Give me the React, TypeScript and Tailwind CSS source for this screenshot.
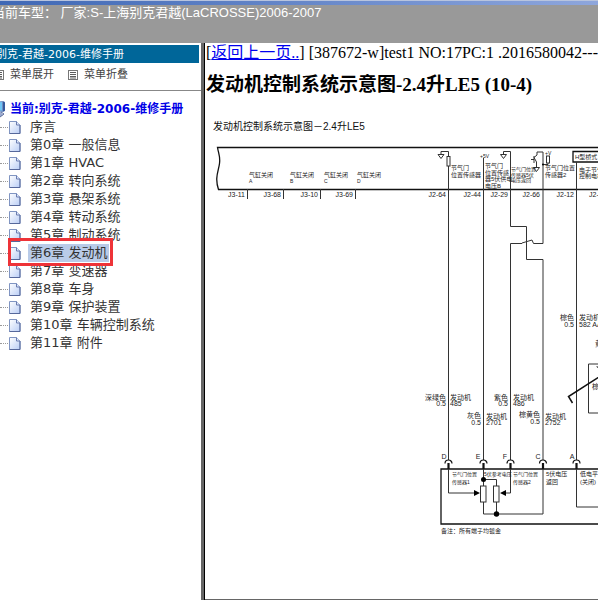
import React from 'react';

const chapters = [
  '序言',
  '第0章 一般信息',
  '第1章 HVAC',
  '第2章 转向系统',
  '第3章 悬架系统',
  '第4章 转动系统',
  '第5章 制动系统',
  '第6章 发动机',
  '第7章 变速器',
  '第8章 车身',
  '第9章 保护装置',
  '第10章 车辆控制系统',
  '第11章 附件',
];

const ACTIVE = 7;

// [x, baseline, size, text, anchor]
type Label = [number, number, number, string, ('end' | 'middle')?];

const labels: Label[] = [
  [249, 177, 6, '气缸关闭'], [249, 183, 5, 'A'],
  [290, 177, 6, '气缸关闭'], [290, 183, 5, 'B'],
  [324, 177, 6, '气缸关闭'], [324, 183, 5, 'C'],
  [357, 177, 6, '气缸关闭'], [357, 183, 5, 'D'],
  [245, 197, 7, 'J3-11', 'end'],
  [281, 197, 7, 'J3-68', 'end'],
  [318, 197, 7, 'J3-10', 'end'],
  [353, 197, 7, 'J3-69', 'end'],
  [446, 197, 7, 'J2-64', 'end'],
  [481, 197, 7, 'J2-44', 'end'],
  [508, 197, 7, 'J2-29', 'end'],
  [540, 197, 7, 'J2-66', 'end'],
  [574, 197, 7, 'J2-12', 'end'],
  [589, 197, 7, 'J2-'],
  [451, 170, 6, '节气门'], [451, 177, 6, '位置传感器'],
  [480, 158, 5, '+5V'],
  [485, 168, 6, '节气门'], [485, 175, 6, '位置传感'],
  [485, 181, 6, '器5伏供电'], [485, 188, 6, '电压B'],
  [511, 171, 5, '节气门位置'], [511, 177, 5, '传感器5伏'], [511, 182, 5, '电压返回'],
  [545, 155, 5, '+V'],
  [545, 170, 6, '节气门位置'], [545, 177, 6, '传感器2'],
  [575, 159, 6, 'H型桥式'],
  [579, 172, 6, '电子节气'], [579, 178, 6, '控制电机'],
  [574, 320, 7, '棕色', 'end'], [574, 327, 7, '0.5', 'end'],
  [579, 320, 7, '发动机'], [579, 327, 7, '582 AA'],
  [595, 346, 7, '黄色'], [592, 389, 7, '棕色'],
  [446, 400, 7, '深绿色', 'end'], [446, 406, 7, '0.5', 'end'],
  [450, 400, 7, '发动机'], [450, 406, 7, '485'],
  [481, 418, 7, '灰色', 'end'], [481, 425, 7, '0.5', 'end'],
  [486, 419, 7, '发动机'], [486, 425, 7, '2701'],
  [508, 400, 7, '紫色', 'end'], [508, 406, 7, '0.5', 'end'],
  [513, 400, 7, '发动机'], [513, 406, 7, '486'],
  [540, 417, 7, '棕黄色', 'end'], [540, 424, 7, '0.5', 'end'],
  [545, 419, 7, '发动机'], [545, 425, 7, '2752'],
  [444, 459, 7, 'D', 'middle'], [478, 459, 7, 'E', 'middle'],
  [505, 459, 7, 'F', 'middle'], [538, 459, 7, 'C', 'middle'],
  [572, 459, 7, 'A', 'middle'],
  [452, 476, 5, '节气门位置'], [452, 484, 5, '传感器1'],
  [484, 476, 5, '5伏参考电压'],
  [513, 476, 5, '节气门位置'], [513, 484, 5, '传感器2'],
  [546, 476, 6, '5伏电压'], [546, 484, 6, '返回'],
  [580, 476, 6, '低电平'], [580, 484, 6, '(关闭)'],
  [441, 533, 6, '备注：所有端子均镀金'],
];

const pins = [448.5, 483.5, 510.5, 543, 576.5];

function PageIcon() {
  return (
    <svg width="14" height="16" viewBox="0 0 14 16" className="shrink-0" aria-hidden="true">
      <defs>
        <linearGradient id="sheet" x1="0" y1="0" x2="1" y2="1">
          <stop offset="0" stopColor="#ffffff" />
          <stop offset="1" stopColor="#b9cdf5" />
        </linearGradient>
      </defs>
      <path d="M1.5 2.5h7l3.500 3.500v8.500h-10.500z" fill="url(#sheet)" stroke="#8095c2" />
      <path d="M12 6v8.500h-10.500" fill="none" stroke="#56689b" />
      <path d="M8.500 2.500v3.500h3.500" fill="#dfe8fb" stroke="#6a7db0" />
    </svg>
  );
}

function ListIcon() {
  return (
    <svg width="10" height="10" viewBox="0 0 10 10" className="shrink-0" aria-hidden="true">
      <rect x="0.5" y="0.5" width="9" height="9" fill="#fff" stroke="#777" />
      <path d="M2 2.5h6M2 4.500h6M2 6.500h6M2 8h6" stroke="#333" strokeWidth="0.8" />
    </svg>
  );
}

function ComputerIcon() {
  return (
    <svg width="16" height="18" viewBox="0 0 16 18" className="shrink-0" aria-hidden="true">
      <path d="M2 2l11-1 2 1v9l-2 1-11-1z" fill="#6f8fc4" />
      <path d="M3 3l9-1v8.500l-9-.5z" fill="#6fc6f5" />
      <path d="M13 1.500l2 1v8l-2 1z" fill="#35589c" />
      <path d="M6 12h5l2 3-3 2H5l-2-2z" fill="#9aa9cf" />
      <path d="M11 12l3 2-4 3" fill="none" stroke="#5c6d9b" />
    </svg>
  );
}

function WiringDiagram() {
  return (
    <svg
      width="460"
      height="440"
      viewBox="205 111 460 440"
      className="block max-w-none font-['Liberation_Sans','Noto_Sans_CJK_SC',sans-serif]"
      role="img"
      aria-label="发动机控制系统示意图"
    >
      <text x="213" y="130" fontSize="10" fill="#111">发动机控制系统示意图－2.4升LE5</text>

      <g fill="none" stroke="#111" strokeWidth="1.3">
        <path d="M665 147.500H217.500c1 6 3 9 2 16-1 8-5 14-1 26H665" />
        <path d="M665 469H441v55h224" />
        <path d="M665 151.500h-92v10.500h92" />
      </g>

      <g fill="none" stroke="#333" strokeWidth="1">
        <path d="M247.500 189v10M283.500 189v10M320.500 189v10M355.500 189v10" />
        {/* harness wires */}
        <path d="M448.500 166v294M483.500 158v302M576.500 162v298" />
        <path d="M510.500 152V226.500H526.500V259.500H543V460" />
        <path d="M543 152V243.500H533.500l-1.500-3.500-10 3M522 243.500H510.500V460" />
        {/* ECM side symbols */}
        <path d="M441 155v-3.500h7.500v5" />
        <path d="M438 154.500h6l-3 4z" />
        <rect x="447" y="156.500" width="3" height="9.500" fill="#fff" />
        <path d="M503.500 155v-3.500h7v2" />
        <path d="M500.500 154.500h6l-3 4z" />
        <path d="M543 152h-6v3l-3 2.500 2.500 4.500v5M531 159.500h3M534 156v7" />
        <path d="M533.500 167.500h6l-3 4z" />
        <path d="M543 164.500h5v-2" />
        <rect x="546.500" y="156" width="3" height="7" fill="#fff" />
        {/* shield loop */}
        <path d="M665 364h-76.500v49h76.500" />
        {/* sensor side */}
        <path d="M448.500 469v24h26" />
        <path d="M483.500 469v17M483.500 479.500h13v6.500M483.500 502v12h59.500v-45M496.500 502v12" />
        <path d="M510.500 469v24h-5" />
        <path d="M576.500 469v38h89" />
        <rect x="480.500" y="486" width="5.500" height="16" fill="#fff" />
        <rect x="493.500" y="486" width="5.500" height="16" fill="#fff" />
      </g>

      <path d="M572.500 403l-4-6.500 36-23" fill="none" stroke="#111" strokeWidth="1.5" />
      <path d="M596 366.500l4 3v-3z" fill="#111" />

      <g fill="#000">
        <circle cx="483.500" cy="479.500" r="2.500" />
        <circle cx="496.500" cy="514" r="2.700" />
        <circle cx="543" cy="164.500" r="1" />
        <path d="M474 490l6 3-6 3zM506 490l-6 3 6 3z" />
      </g>

      {pins.map((x) => (
        <g key={x} fill="none" stroke="#111">
          <path d={`M${x - 3.5} 463.500a3.500 3.500 0 0 1 7 0`} strokeWidth="1.200" />
          <path d={`M${x} 463v6`} strokeWidth="2.200" />
        </g>
      ))}

      <g fill="#222">
        {labels.map(([x, y, size, text, anchor], i) => (
          <text key={i} x={x} y={y} fontSize={size} textAnchor={anchor}>
            {text}
          </text>
        ))}
      </g>
    </svg>
  );
}

function Sidebar() {
  return (
    <nav className="w-[201px] shrink-0 overflow-hidden bg-white pt-0.5 font-['DejaVu_Sans','Noto_Sans_CJK_SC',sans-serif]">
      <div className="mr-0.5 h-[18px] bg-[#006699] text-[11px] leading-5 whitespace-nowrap text-white">
        <div className="-ml-1">别克-君越-2006-维修手册</div>
      </div>
      <div className="-ml-1.5 flex h-7 items-start gap-3.5 border-b border-[#888] pt-0.5 text-[11px] leading-5 text-[#444]">
        <button type="button" className="flex items-center gap-1.5">
          <ListIcon />
          菜单展开
        </button>
        <button type="button" className="flex items-center gap-1.5">
          <ListIcon />
          菜单折叠
        </button>
      </div>

      <div className="-ml-2.5 flex items-center gap-1 pt-[9px] text-[12px] leading-[18px] font-bold whitespace-nowrap text-[#0000e6]">
        <ComputerIcon />
        当前:别克-君越-2006-维修手册
      </div>
      <ul>
        {chapters.map((name, i) => (
          <li key={name} className="relative flex h-[18px] items-center text-[13px] leading-[18px] whitespace-nowrap">
            <span className="w-2 shrink-0 border-t border-dotted border-[#999]" />
            <PageIcon />
            <a
              href="#"
              className={
                i === ACTIVE
                  ? 'ml-1.5 bg-[#b9cbe8] px-0.5 text-[#333]'
                  : 'ml-1.5 px-0.5 text-[#333]'
              }
            >
              {name}
            </a>
            {i === ACTIVE && (
              <span className="pointer-events-none absolute -top-1.5 left-2 z-10 h-7 w-[105px] border-[3px] border-[#ee3338]" />
            )}
          </li>
        ))}
      </ul>
    </nav>
  );
}

export default function App() {
  return (
    <div className="flex min-h-screen flex-col overflow-hidden bg-white">
      <header className="h-[43px] bg-[#999999] font-['Liberation_Sans','Noto_Sans_CJK_SC',sans-serif] text-[13px] leading-4 whitespace-nowrap text-white">
        <div className="h-[5px] border-t border-[#b8c4de] bg-linear-to-r from-[#3f68b5] to-[#8ea6dc]" />
        <div className="-ml-2">当前车型： 厂家:S-上海别克君越(LaCROSSE)2006-2007</div>
      </header>

      <div className="flex grow gap-[3px] bg-[#666]">
        <Sidebar />
        <main className="flex min-w-0 grow flex-col overflow-hidden border-l border-black bg-white">
          <div className="grow border-b border-[#666] pl-px font-['Liberation_Serif','Noto_Sans_CJK_SC',serif] text-black">
            <p className="h-5 text-[16px] leading-5 whitespace-nowrap">
              [<a href="#" className="text-[#0000ee] underline">返回上一页..</a>] [387672-w]test1 NO:17PC:1 .2016580042---
            </p>
            <h1 className="pt-2.5 text-[19px] leading-6 font-bold whitespace-nowrap">
              发动机控制系统示意图-2.4升LE5 (10-4)
            </h1>
            <div className="-ml-px pt-3.5">
              <WiringDiagram />
            </div>
          </div>
        </main>
      </div>
    </div>
  );
}
